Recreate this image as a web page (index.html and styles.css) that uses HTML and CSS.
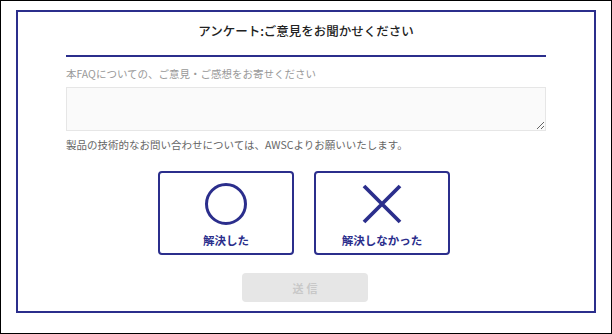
FILE: index.html
```html
<!DOCTYPE html>
<html lang="ja">
<head>
<meta charset="utf-8">
<link rel="stylesheet" href="styles.css">
</head>
<body>
<div class="page">
  <div class="frame">
    <div class="header">
      <h1 class="title">アンケート:ご意見をお聞かせください</h1>
    </div>
    <p class="label">本FAQについての、ご意見・ご感想をお寄せください</p>
    <textarea class="comment"></textarea>
    <p class="note">製品の技術的なお問い合わせについては、AWSCよりお願いいたします。</p>
    <div class="choices">
      <button class="choice">
        <svg class="icon" width="44" height="44" viewBox="0 0 44 44"><circle cx="22" cy="22" r="19.5" fill="none" stroke="#2b2e8c" stroke-width="3"/></svg>
        <span class="choice-label">解決した</span>
      </button>
      <button class="choice">
        <svg class="icon" width="44" height="44" viewBox="0 0 44 44"><path d="M4 4 L40 40 M40 4 L4 40" fill="none" stroke="#2b2e8c" stroke-width="3.8"/></svg>
        <span class="choice-label">解決しなかった</span>
      </button>
    </div>
    <div class="submit-row">
      <button class="submit" disabled>送信</button>
    </div>
  </div>
</div>
</body>
</html>
```
FILE: styles.css
```css
* { box-sizing: border-box; }
html, body { margin: 0; padding: 0; background: #fff; }
body { font-family: "Noto Sans CJK JP", "Noto Sans", sans-serif; }
.page {
  width: 612px;
  height: 334px;
  border: 1px solid #000;
  padding: 9px 15px 0 15px;
}
.frame {
  border: 2px solid #2b2e8c;
  padding: 0 48px 9px;
}
.header {
  padding: 9px 0 14px;
  border-bottom: 2px solid #2b2e8c;
}
.title {
  margin: 0;
  text-align: center;
  font-size: 12.5px;
  line-height: 20px;
  font-weight: 500;
  color: #222;
}
.label {
  margin: 9px 0 0;
  font-size: 10.5px;
  line-height: 16px;
  color: #999;
}
.comment {
  display: block;
  margin-top: 5px;
  width: 480px;
  height: 44px;
  border: 1px solid #e6e6e6;
  background: #fafafa;
  border-radius: 0;
  padding: 4px;
  font: inherit;
}
.note {
  margin: 6px 0 0;
  font-size: 10.5px;
  line-height: 16px;
  color: #666;
}
.choices {
  display: flex;
  justify-content: center;
  gap: 20px;
  margin-top: 18px;
  padding-right: 4px;
}
.choice {
  width: 136px;
  height: 84px;
  border: 2px solid #2b2e8c;
  border-radius: 4px;
  background: #fff;
  padding: 9px 0 0;
  display: flex;
  flex-direction: column;
  align-items: center;
  font: inherit;
}
.icon { display: block; }
.choice-label {
  margin-top: 6px;
  font-size: 11.5px;
  line-height: 16px;
  font-weight: 700;
  color: #2b2e8c;
}
.submit-row {
  display: flex;
  justify-content: center;
  margin-top: 18px;
  padding-right: 2px;
}
.submit {
  width: 126px;
  height: 29px;
  border: none;
  border-radius: 4px;
  background: #e6e6e6;
  color: #c8c8c8;
  font-family: inherit;
  font-size: 11px;
  font-weight: 700;
  letter-spacing: 3px;
  padding: 0 0 0 3px;
}
```
